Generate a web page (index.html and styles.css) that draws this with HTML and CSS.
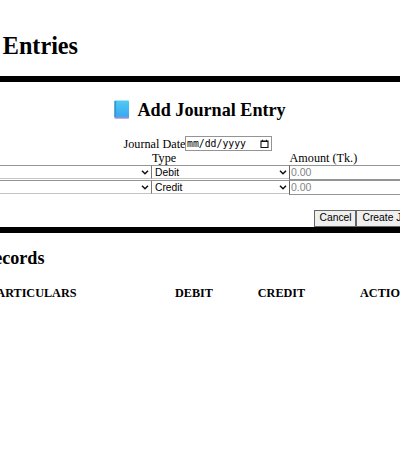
FILE: index.html
```html
<!DOCTYPE html>
<html lang="en">
<head>
<meta charset="utf-8">
<title>Entries</title>
<link rel="stylesheet" href="styles.css">
</head>
<body>
<header class="page-head"><h1>Entries</h1></header>
<section class="dialog">
  <h2 class="title">
    <svg class="book" viewBox="0 0 16 20"><defs><linearGradient id="cover" x2="0" y2="1"><stop stop-color="#52caf3"/><stop offset="1" stop-color="#38a9f0"/></linearGradient></defs><rect x=".5" y="1" width="14.5" height="18" rx="1" fill="#b9b5ea"/><rect x=".5" y="16.6" width="14.5" height="1" fill="#7779cc"/><rect x=".5" y=".5" width="14.5" height="16.3" rx=".8" fill="url(#cover)"/><path d="M.5 1h1.6v16H.5z" fill="#3794cc"/></svg>
    <span class="title-text">Add Journal Entry</span>
  </h2>
  <div class="date-row"><span class="date-label">Journal Date</span><div class="date"><span class="date-text">mm/dd/yyyy</span><svg class="calendar" viewBox="0 0 9 10"><path d="M1 2h7v6.5H1zM1 2.5h7M2.5 .8v1.2M6.5 .8v1.2" fill="none" stroke="#111" stroke-width="1.1"/></svg></div></div>
  <div class="labels"><span class="type-label">Type</span><span class="amount-label">Amount (Tk.)</span></div>
  <div class="line">
    <div class="select account"><svg class="arrow" viewBox="0 0 8 5"><path d="M1 .8l3 3 3-3"/></svg></div>
    <div class="select"><span class="value debit">Debit</span><svg class="arrow" viewBox="0 0 8 5"><path d="M1 .8l3 3 3-3"/></svg></div>
    <div class="amount"><span class="num">0.00</span></div>
  </div>
  <div class="line">
    <div class="select account"><svg class="arrow" viewBox="0 0 8 5"><path d="M1 .8l3 3 3-3"/></svg></div>
    <div class="select"><span class="value credit">Credit</span><svg class="arrow" viewBox="0 0 8 5"><path d="M1 .8l3 3 3-3"/></svg></div>
    <div class="amount"><span class="num">0.00</span></div>
  </div>
  <div class="actions"><div class="btn cancel"><span>Cancel</span></div><div class="btn create"><span>Create J</span></div></div>
</section>
<section class="records">
  <h2 class="records-title">ecords</h2>
  <div class="columns"><span class="particulars">ARTICULARS</span><span class="col-debit">DEBIT</span><span class="col-credit">CREDIT</span><span class="col-action">ACTIO</span></div>
</section>
</body>
</html>
```
FILE: styles.css
```css
* { box-sizing: border-box; }
body { margin: 0; width: 400px; height: 450px; overflow: hidden; background: #fff; color: #000; font: 12.2px/15px "Liberation Serif", serif; white-space: nowrap; }
h1, h2 { margin: 0; font-weight: bold; }
svg { display: block; flex: none; }
.page-head { height: 76px; padding-top: 32px; }
h1 { width: 78px; display: flex; justify-content: flex-end; font-size: 24.2px; line-height: 28px; }
.dialog { height: 157px; border-top: 6px solid #000; border-bottom: 6px solid #000; }
.title { display: flex; height: 54px; padding: 18px 0 0 113.5px; font-size: 18.15px; line-height: 21px; }
.book { width: 16px; height: 20px; margin-right: 8px; }
.date-row { display: flex; height: 15px; padding-left: 123.5px; line-height: 16px; }
.date-label { width: 61.5px; }
.date { display: flex; align-items: center; justify-content: space-between; width: 87px; height: 15px; padding: 0 2px 0 1px; border: 1px solid #949494; }
.date-text { font: 9.8px/13px "DejaVu Sans Mono", monospace; }
.calendar { width: 9px; height: 10px; }
.labels { display: flex; height: 14px; padding-left: 152px; line-height: 14px; }
.type-label { width: 137.5px; }
.line { display: flex; height: 15px; }
.select { display: flex; align-items: center; justify-content: space-between; width: 138px; height: 14px; padding: 0 2px 0 3px; border: 1px solid #777; border-top-color: #949494; border-bottom-color: #c4c4c4; border-right: 0; font: 10.3px/13px "Liberation Sans", sans-serif; }
.account { width: 151px; border-left: 0; justify-content: flex-end; padding-right: 2px; }
.arrow { width: 8px; height: 5px; fill: none; stroke: #111; stroke-width: 1.5; }
.amount { width: 111px; height: 15px; padding-left: 1px; border: 1px solid #949494; border-left-color: #666; border-right: 0; color: #858585; font: 10.5px/13px "Liberation Sans", sans-serif; }
.actions { display: flex; height: 32px; padding: 15px 0 0 314px; }
.btn { height: 17px; border: 1px solid #666; background: #efefef; font: 10.3px/14px "Liberation Sans", sans-serif; }
.cancel { width: 42px; padding-left: 4.5px; }
.create { width: 44px; padding-left: 5.5px; border-right: 0; }
.records { padding-top: 15px; }
.records-title { display: flex; justify-content: flex-end; width: 44.5px; font-size: 18.15px; line-height: 21px; }
.columns { display: flex; padding-top: 16px; font-weight: bold; line-height: 16px; }
.particulars { width: 76.5px; margin-right: 98.5px; display: flex; justify-content: flex-end; }
.col-debit { width: 83px; }
.col-credit { width: 102.5px; }
```
